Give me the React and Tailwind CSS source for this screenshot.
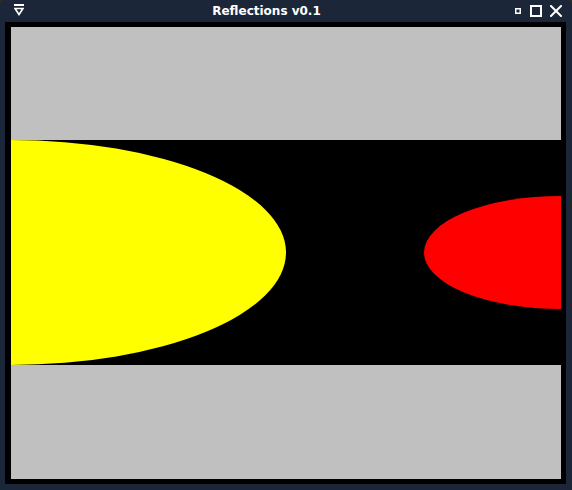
import React from "react";

function ShadeIcon() {
  return (
    <svg width="10" height="12" viewBox="0 0 10 12" className="block">
      <rect x="0" y="0" width="10" height="2" fill="#ffffff" />
      <path d="M1 4.5 H9 L5 10.5 Z" fill="none" stroke="#ffffff" strokeWidth="1.6" strokeLinejoin="miter" />
    </svg>
  );
}

function DotIcon() {
  return (
    <svg width="6" height="6" viewBox="0 0 6 6" className="block">
      <rect x="0.75" y="0.75" width="4.5" height="4.5" fill="none" stroke="#ffffff" strokeWidth="1.5" />
    </svg>
  );
}

function MaxIcon() {
  return (
    <svg width="12" height="12" viewBox="0 0 12 12" className="block">
      <rect x="1" y="1" width="10" height="10" fill="none" stroke="#ffffff" strokeWidth="2" />
    </svg>
  );
}

function CloseIcon() {
  return (
    <svg width="12" height="12" viewBox="0 0 12 12" className="block">
      <path d="M1 1 L11 11 M11 1 L1 11" stroke="#ffffff" strokeWidth="2" strokeLinecap="square" />
    </svg>
  );
}

export default function App() {
  return (
    <div className="w-[572px] h-[490px] bg-[#2b2b2b] overflow-hidden">
      <div className="w-full h-full rounded-t-[6px] bg-[#1b2639] flex flex-col pl-[5px] pr-[6px] pb-[6px]">
        <div className="h-[22px] flex items-center shrink-0">
          <div className="w-[19px] flex justify-end">
            <div className="pb-[2px]">
              <ShadeIcon />
            </div>
          </div>
          <div
            className="flex-1 text-center text-white font-bold text-[12px] leading-none pb-[1px] pr-[6px]"
            style={{ fontFamily: '"DejaVu Sans", sans-serif' }}
          >
            Reflections v0.1
          </div>
          <div className="flex items-center pb-[1px]">
            <div className="mr-[9px]"><DotIcon /></div>
            <div className="mr-[8px]"><MaxIcon /></div>
            <div className="mr-[4px]"><CloseIcon /></div>
          </div>
        </div>
        <div className="flex-1 bg-black pt-[5px] pl-[6px] pr-[5px] pb-[5px] flex">
          <div className="flex-1 flex flex-col bg-[#c0c0c0]">
            <div className="h-[113px] bg-[#c0c0c0]" />
            <div className="h-[225px] bg-black overflow-hidden">
              <svg width="550" height="225" viewBox="0 0 550 225" className="block">
                <ellipse cx="0" cy="112.5" rx="275" ry="112.5" fill="#ffff00" />
                <ellipse cx="550" cy="112.5" rx="137" ry="56.5" fill="#ff0000" />
              </svg>
            </div>
            <div className="flex-1 bg-[#c0c0c0]" />
          </div>
        </div>
      </div>
    </div>
  );
}
